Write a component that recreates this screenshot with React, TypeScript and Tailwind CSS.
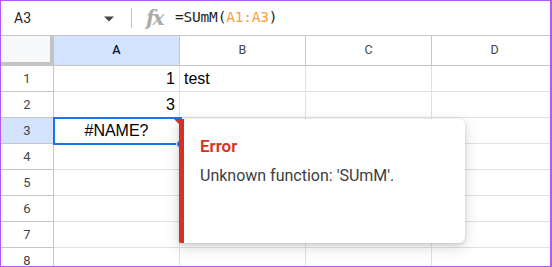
const cols = ["A", "B", "C", "D"];

const rows: { n: number; a?: string; align?: string; b?: string }[] = [
  { n: 1, a: "1", align: "text-right", b: "test" },
  { n: 2, a: "3", align: "text-right" },
  { n: 3, a: "#NAME?", align: "text-center" },
  { n: 4 },
  { n: 5 },
  { n: 6 },
  { n: 7 },
  { n: 8 },
];

const FormulaBar = () => (
  <div className="h-[35px] flex items-center border-b border-[#c4c7c5] shrink-0">
    <div className="w-[92px] pl-[13px] text-[14px] text-[#1f1f1f] font-['Roboto',sans-serif]">A3</div>
    <svg width="10" height="6" viewBox="0 0 10 5" className="ml-[11px] mt-[1px]">
      <path d="M0 0h10L5 5z" fill="#444746" />
    </svg>
    <div className="ml-[17px] w-px h-[20px] bg-[#c4c7c5]" />
    <div className="ml-[14px] w-[20px] text-[20px] italic font-semibold text-[#ababab] font-['DejaVu_Serif',serif] leading-none tracking-[-2px]">
      fx
    </div>
    <div className="ml-[9px] text-[14.5px] text-[#1f1f1f] font-['DejaVu_Sans_Mono',monospace] tracking-[-0.2px]">
      =SUmM(<span className="text-[#f4a040]">A1:A3</span>)
    </div>
  </div>
);

const HeaderRow = () => (
  <div className="flex h-[30px] shrink-0">
    <div className="w-[53px] shrink-0 bg-[#f8f9fa] border-r-4 border-b-4 border-[#c4c4c4]" />
    {cols.map((c) => (
      <div
        key={c}
        className={`w-[126px] shrink-0 flex items-center justify-center border-r border-b border-[#c4c7c5] text-[12.5px] font-['Roboto',sans-serif] ${
          c === "A" ? "bg-[#d3e3fd] text-[#0b1a33] font-medium" : "bg-white text-[#444746]"
        }`}
      >
        {c}
      </div>
    ))}
  </div>
);

export default function App() {
  return (
    <div className="w-[552px] h-[267px] overflow-hidden relative bg-white border-t border-l border-b border-r-2 border-[#b358f5] flex flex-col">
      <FormulaBar />
      <HeaderRow />
      {rows.map((r) => (
        <div key={r.n} className="flex h-[26px] shrink-0">
          <div
            className={`w-[53px] shrink-0 flex items-center justify-center border-r border-b border-[#c4c7c5] text-[13px] font-['Roboto',sans-serif] text-[#444746] ${
              r.n === 3 ? "bg-[#d3e3fd]" : "bg-white"
            }`}
          >
            {r.n}
          </div>
          <div
            className={`w-[126px] shrink-0 px-[4px] flex items-center border-r border-b border-[#e1e1e1] text-[16px] text-black font-['Liberation_Sans',Arial,sans-serif] ${
              r.align === "text-right" ? "justify-end" : r.align === "text-center" ? "justify-center" : ""
            }`}
          >
            {r.a}
          </div>
          <div className="w-[126px] shrink-0 px-[4px] flex items-center border-r border-b border-[#e1e1e1] text-[16px] text-black font-['Liberation_Sans',Arial,sans-serif]">
            {r.b}
          </div>
          <div className="w-[126px] shrink-0 border-r border-b border-[#e1e1e1]" />
          <div className="w-[126px] shrink-0 border-b border-[#e1e1e1]" />
        </div>
      ))}

      {/* selection on A3 */}
      <div className="absolute left-[52px] top-[116px] w-[129px] h-[28px] border-2 border-[#1a73e8] pointer-events-none" />
      <div className="absolute left-[173px] top-[118px] w-0 h-0 border-t-[6px] border-l-[6px] border-t-[#d93025] border-l-transparent" />
      <div className="absolute left-[175px] top-[139px] w-[8px] h-[8px] rounded-full bg-[#1a73e8] border border-white" />

      {/* error popover */}
      <div className="absolute left-[178px] top-[118px] w-[286px] h-[124px] bg-white rounded-r-[6px] rounded-l-[2px] border-l-[5px] border-[#d93025] shadow-[0_4px_14px_rgba(60,64,67,0.22),0_1px_3px_rgba(60,64,67,0.18)] pl-[16px] pt-[14px] font-['Roboto',sans-serif]">
        <div className="text-[17px] font-semibold text-[#d93025] leading-[26px]">Error</div>
        <div className="mt-[7px] text-[16px] text-[#3c4043] leading-[20px]">Unknown function: 'SUmM'.</div>
      </div>
    </div>
  );
}
